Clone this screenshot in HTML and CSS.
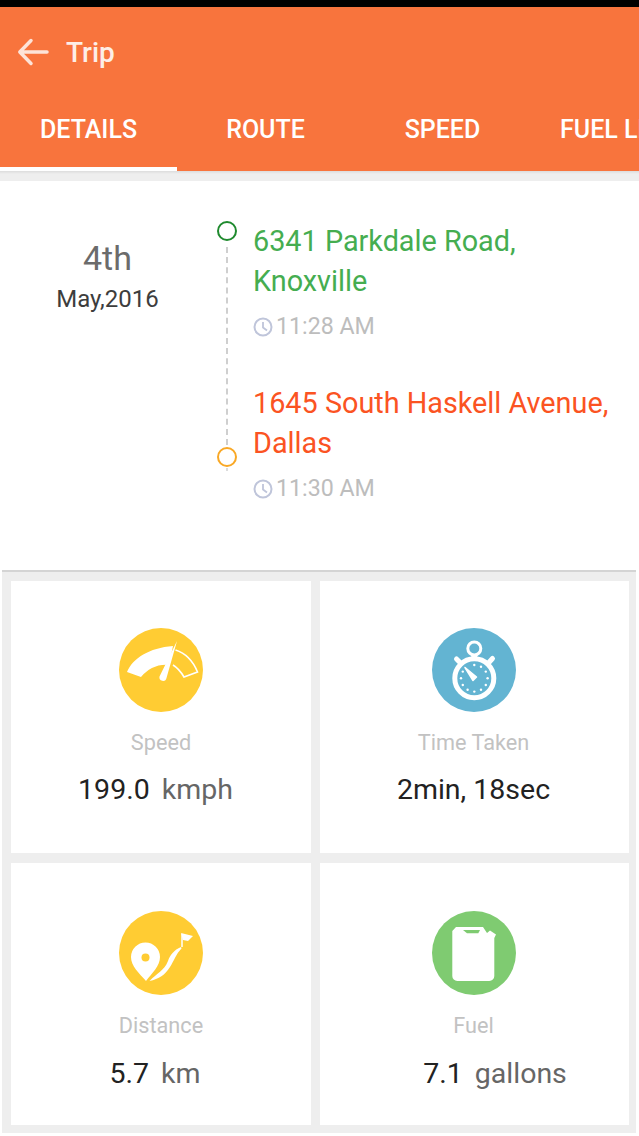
FILE: index.html
```html
<!DOCTYPE html>
<html lang="en">
<head>
    <meta charset="UTF-8">
    <meta name="viewport" content="width=device-width, initial-scale=1.0">
    <title>Trip</title>
    <link rel="stylesheet" href="styles.css">
</head>
<body>
    <div class="status-bar"></div>
    <header class="app-bar">
        <div class="title-row">
            <svg class="back-icon" viewBox="0 0 32 28" width="32" height="28">
                <path d="M30 14H3M14 2.500 2.800 14 14 25.500" fill="none" stroke="#fde3d8" stroke-width="3.500" stroke-linecap="round" stroke-linejoin="round"/>
            </svg>
            <span class="title">Trip</span>
        </div>
        <nav class="tabs">
            <a class="tab active">DETAILS</a>
            <a class="tab">ROUTE</a>
            <a class="tab">SPEED</a>
            <a class="tab tab-cut">FUEL LEVEL</a>
        </nav>
    </header>
    <div class="shadow-strip"></div>

    <section class="trip">
        <div class="date">
            <div class="day">4th</div>
            <div class="month">May,2016</div>
        </div>
        <div class="timeline">
            <span class="dot dot-start"></span>
            <span class="dash"></span>
            <span class="dot dot-end"></span>
            <span class="dash-tail"></span>
        </div>
        <div class="stops">
            <div class="stop">
                <div class="address from">6341 Parkdale Road,<br>Knoxville</div>
                <div class="time">
                    <svg class="clock" viewBox="0 0 20 20" width="20" height="20"><circle cx="10" cy="10" r="8.500" fill="none" stroke="#bfc5da" stroke-width="2"/><path d="M10 5v5.500l4 3" fill="none" stroke="#bfc5da" stroke-width="1.800"/></svg>
                    11:28 AM
                </div>
            </div>
            <div class="stop">
                <div class="address to">1645 South Haskell Avenue,<br>Dallas</div>
                <div class="time">
                    <svg class="clock" viewBox="0 0 20 20" width="20" height="20"><circle cx="10" cy="10" r="8.500" fill="none" stroke="#bfc5da" stroke-width="2"/><path d="M10 5v5.500l4 3" fill="none" stroke="#bfc5da" stroke-width="1.800"/></svg>
                    11:30 AM
                </div>
            </div>
        </div>
    </section>

    <section class="stats">
        <div class="card speed-card">
            <svg class="stat-icon" viewBox="0 0 84 84" width="84" height="84">
                <circle cx="42" cy="42" r="42" fill="#ffcc33"/>
                <path d="M8 44C14 30 30 20 54 18L50 37C38 36 29 41 22 49Z" fill="#fff"/>
                <path d="M56.500 22C66 25 74 33 78.500 44L65 49C62 44 59 40 54 37" fill="none" stroke="#fff" stroke-width="1.600"/>
                <path d="M52 36 50 44" stroke="#ffcc33" stroke-width="1.500"/>
                <path d="M58 13 47.500 50A3.500 3.500 0 0 1 40.500 48.500Z" fill="#fff"/>
            </svg>
            <div class="stat-label">Speed</div>
            <div class="stat-value">199.0 <span class="unit">kmph</span></div>
        </div>
        <div class="card time-card">
            <svg class="stat-icon" viewBox="0 0 84 84" width="84" height="84">
                <circle cx="42" cy="42" r="42" fill="#63b4d2"/>
                <circle cx="42.300" cy="20.500" r="6.500" fill="none" stroke="#fff" stroke-width="3"/>
                <path d="M42.300 26V32" stroke="#fff" stroke-width="6"/>
                <path d="M24.500 31 29 35.500M60.500 30.500 56 35.500" stroke="#fff" stroke-width="5" stroke-linecap="round"/>
                <circle cx="42.300" cy="50.300" r="19.500" fill="#63b4d2" stroke="#fff" stroke-width="5"/>
                <path d="M33 39.500 44.500 49 41 52.500Z" fill="#fff" stroke="#fff" stroke-width="1.500" stroke-linejoin="round"/>
                <g fill="#fff">
                    <circle cx="42.300" cy="37" r="1.200"/><circle cx="49" cy="38.800" r="1.200"/><circle cx="53.800" cy="43.600" r="1.200"/>
                    <circle cx="55.600" cy="50.300" r="1.200"/><circle cx="53.800" cy="57" r="1.200"/><circle cx="49" cy="61.800" r="1.200"/>
                    <circle cx="42.300" cy="63.600" r="1.200"/><circle cx="35.600" cy="61.800" r="1.200"/><circle cx="30.800" cy="57" r="1.200"/>
                    <circle cx="29" cy="50.300" r="1.200"/><circle cx="30.800" cy="43.600" r="1.200"/>
                </g>
            </svg>
            <div class="stat-label">Time Taken</div>
            <div class="stat-value">2min, 18sec</div>
        </div>
        <div class="card distance-card">
            <svg class="stat-icon" viewBox="0 0 84 84" width="84" height="84">
                <circle cx="42" cy="42" r="42" fill="#ffcc33"/>
                <path d="M27 70C20 62 12 55 12 46A14.500 14.500 0 0 1 41 46C41 55 33 62 27 70Z" fill="#fff"/>
                <circle cx="26.500" cy="46.500" r="4" fill="#ffcc33"/>
                <path d="M30.500 70C38 62 45 60 49 50C51 44 55 39 62 36L62.500 37.500C57 43 55 50 51 56C46 64 40 68 30.500 70Z" fill="#fff"/>
                <path d="M63 36V23" stroke="#fff" stroke-width="1.500"/>
                <path d="M62 22 74 25 69 30 64 29Z" fill="#fff"/>
            </svg>
            <div class="stat-label">Distance</div>
            <div class="stat-value">5.7 <span class="unit">km</span></div>
        </div>
        <div class="card fuel-card">
            <svg class="stat-icon" viewBox="0 0 84 84" width="84" height="84">
                <circle cx="42" cy="42" r="42" fill="#7fcb71"/>
                <path d="M24 16H51L55 22 58 19.500 64 23.500 62.300 27V65A5 5 0 0 1 57.300 70H25.300A5 5 0 0 1 20.300 65V20Z" fill="#fff"/>
                <path d="M31 19H48L46.300 22.300H35Z" fill="#7fcb71"/>
            </svg>
            <div class="stat-label">Fuel</div>
            <div class="stat-value">7.1 <span class="unit">gallons</span></div>
        </div>
    </section>
</body>
</html>
```

FILE: styles.css
```css
* {
    box-sizing: border-box;
}
html, body {
    margin: 0;
    padding: 0;
}
body {
    width: 639px;
    height: 1136px;
    overflow: hidden;
    background-color: white;
    font-family: Roboto, "Noto Sans", sans-serif;
}
.status-bar {
    height: 7px;
    background-color: black;
}
.app-bar {
    height: 164px;
    background-color: #f8743d;
    color: #fff;
    display: flex;
    flex-direction: column;
    overflow: hidden;
}
.title-row {
    height: 90px;
    padding: 0 0 0 17px;
    display: flex;
    align-items: center;
    gap: 17px;
}
.title {
    font-size: 28px;
    font-weight: 500;
    color: #fdeee7;
}
.tabs {
    flex: 1;
    display: flex;
}
.tab {
    flex: 0 0 177px;
    height: 74px;
    padding-top: 15px;
    text-align: center;
    font-size: 25px;
    font-weight: 500;
    line-height: 36px;
    white-space: nowrap;
}
.tab-cut {
    flex: 0 0 auto;
    padding-left: 29px;
}
.tab.active {
    border-bottom: 4px solid white;
}
.shadow-strip {
    height: 10px;
    background: linear-gradient(#dcdcdc, #eeeeee 30%, #eeeeee);
}
.trip {
    height: 389px;
    display: flex;
    padding-top: 36px;
    background-color: white;
}
.date {
    width: 215px;
    text-align: center;
    padding-top: 21px;
}
.day {
    font-size: 34px;
    line-height: 40px;
    color: #6b6b6b;
}
.month {
    font-size: 24px;
    line-height: 40px;
    margin-top: 1px;
    color: #3d3d3d;
}
.timeline {
    width: 38px;
    height: 254px;
    margin: 0 8px 0 -8px;
    padding-left: 2px;
    display: flex;
    flex-direction: column;
    align-items: center;
}
.dot {
    flex: none;
    width: 20px;
    height: 20px;
    border: 2px solid #1f8a2e;
    border-radius: 50%;
    margin-top: 4px;
}
.dot-end {
    margin-top: 0;
    border-color: #f9a825;
}
.dash {
    flex: 1;
    margin: 6px 0 2px;
    border-left: 2px dashed #cfcfcf;
}
.dash-tail {
    flex: none;
    height: 3px;
    margin-top: 1px;
    border-left: 2px solid #dcdcdc;
}
.stops {
    flex: 1;
    margin-top: 4px;
    display: flex;
    flex-direction: column;
    gap: 37px;
}
.address {
    font-size: 28.800px;
    line-height: 40px;
    white-space: nowrap;
}
.from {
    color: #45ad50;
}
.to {
    color: #fb5322;
}
.time {
    display: flex;
    align-items: center;
    margin-top: 5px;
    height: 40px;
    font-size: 23.200px;
    color: #bdbdbd;
    gap: 3px;
}
.clock {
    margin-top: 2px;
}
.stats {
    height: 563px;
    margin: 0 3px 0 2px;
    padding: 9px 7px 8px 9px;
    display: grid;
    grid-template-columns: 300px 309px;
    grid-template-rows: 272px 262px;
    column-gap: 9px;
    row-gap: 10px;
    background-color: #eeeeee;
    border-top: 2px solid #d4d4d4;
}
.card {
    background-color: white;
    display: flex;
    flex-direction: column;
    align-items: center;
    padding-top: 47px;
}
.distance-card, .fuel-card {
    padding-top: 48px;
}
.time-card, .fuel-card {
    padding-right: 2px;
}
.stat-icon {
    display: block;
    flex: none;
}
.stat-label {
    margin-top: 18px;
    font-size: 21.700px;
    line-height: 26px;
    color: #c2c2c2;
}
.stat-value {
    margin-top: 17px;
    font-size: 28.500px;
    line-height: 34px;
    color: #222;
    white-space: pre;
}
.distance-card .stat-value, .fuel-card .stat-value {
    margin-top: 18px;
}
.unit {
    color: #666;
    margin-left: 5px;
}
.speed-card .stat-value {
    margin-right: 11px;
}
.distance-card .stat-value {
    margin-right: 12px;
}
.fuel-card .stat-value {
    margin-left: 43px;
}
```
